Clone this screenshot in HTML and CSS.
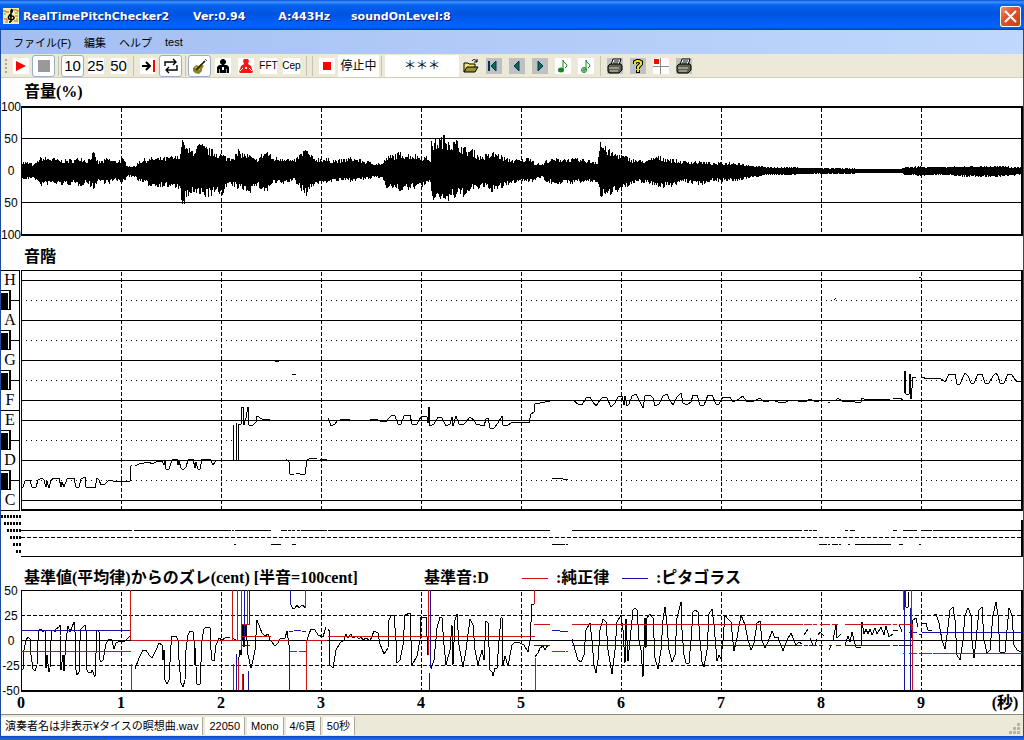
FILE: index.html
```html
<!DOCTYPE html>
<html lang="ja">
<head>
    <meta charset="UTF-8">
    <meta name="viewport" content="width=device-width, initial-scale=1.0">
    <title>RealTimePitchChecker2</title>
    <link rel="stylesheet" href="styles.css">
</head>
<body>
<div class="window">
    <header class="titlebar">
        <svg class="app-icon" width="16" height="16" viewBox="0 0 16 16">
            <rect width="16" height="16" fill="#f4f0a8"/>
            <path d="M0 3h3v1h3M10 2h4v1h2M1 11h3v2M12 8h3M11 13h4" fill="none" stroke="#d84830"/>
            <path d="M1 6h2M12 5h3M2 14h3M13 11h2" stroke="#48a050"/>
            <path d="M8 14V3c0-2 2-2 1 1L6 8c-3 4 5 5 5 2 0-3-5-2-3 0M8 14H6" fill="none" stroke="#000" stroke-width="1.5"/>
        </svg>
        <h1>RealTimePitchChecker2</h1>
        <span>Ver:0.94</span>
        <span class="tuning">A:443Hz</span>
        <span class="level">soundOnLevel:8</span>
        <button class="close" aria-label="閉じる">
            <svg width="21" height="21" viewBox="0 0 21 21"><path d="M5 5l11 11M16 5L5 16" stroke="#fff" stroke-width="2"/></svg>
        </button>
    </header>

    <nav class="menubar">
        <button>ファイル(F)</button>
        <button>編集</button>
        <button>ヘルプ</button>
        <button>test</button>
    </nav>

    <div class="toolbar">
        <span class="grip"></span>
        <button class="tool" aria-label="再生"><svg viewBox="0 0 16 16"><rect width="16" height="16" fill="#fff"/><path d="M3 3l10 5-10 5z" fill="#f00"/></svg></button>
        <button class="tool active" aria-label="停止"><svg viewBox="0 0 16 16"><path d="M2 2h12v12H2z" fill="#999"/></svg></button>
        <span class="sep"></span>
        <button class="tool num active">10</button>
        <button class="tool num">25</button>
        <button class="tool num">50</button>
        <span class="sep"></span>
        <button class="tool" aria-label="最後へ"><svg viewBox="0 0 16 16"><rect width="16" height="16" fill="#fff"/><path d="M2 8h8M6 4l4 4-4 4" fill="none" stroke="#000" stroke-width="2"/><path d="M13 2h2v12h-2z" fill="#f00"/></svg></button>
        <button class="tool active" aria-label="繰り返し"><svg viewBox="0 0 16 16"><path d="M2 8V4h11M10 1l3 3-3 3M14 7v5H4M6 9l-3 3 3 3" fill="none" stroke="#000" stroke-width="1.4"/></svg></button>
        <span class="sep"></span>
        <button class="tool active" aria-label="バイオリン"><svg viewBox="0 0 16 16"><path d="M1 10l3-3 3 1 2-2 3 2-2 3 0 2-3 3-4-1-2-2z" fill="#8a8420"/><path d="M4 12l9-9" stroke="#202000" stroke-width="1.6"/><path d="M13 1l2 2M11 3l2 2" stroke="#555"/><path d="M3 9l2 1M7 11l1 1" stroke="#d8c840"/></svg></button>
        <button class="tool" aria-label="男声"><svg viewBox="0 0 16 16"><rect width="16" height="16" fill="#fff"/><path d="M7 1h2l2 2v2L9 7h3l2 2v6H2V9l2-2h3L5 5V3z"/><path d="M7 9h2v3H7z" fill="#fff"/><path d="M4.500 11v4M11.500 11v4" stroke="#999"/></svg></button>
        <button class="tool" aria-label="女声"><svg viewBox="0 0 16 16"><rect width="16" height="16" fill="#fff"/><path d="M6 1h4l1 2-1 3 3 2 2 6-1 1H2l-1-1 2-6 3-2-1-3z" fill="#f01818"/><path d="M7 9h2v2H7z" fill="#fff"/><path d="M2 13l3-3M14 13l-3-3" stroke="#fff"/></svg></button>
        <button class="tool word">FFT</button>
        <button class="tool word">Cep</button>
        <span class="sep"></span>
        <span class="sep"></span>
        <span class="tool"><svg viewBox="0 0 16 16"><rect width="16" height="16" fill="#fff"/><path d="M4 4h8v8H4z" fill="#f00"/></svg></span>
        <output class="state">停止中</output>
        <span class="divider"></span>
        <output class="note">＊＊＊</output>
        <button class="tool" aria-label="開く"><svg viewBox="0 0 16 16"><path d="M1 14V5h4l1 1h6v3" fill="#f0e080" stroke="#000"/><path d="M1 14l3-5h11l-3 5z" fill="#9c9428" stroke="#000"/><path d="M9 3c2-3 4-1 5 1M14 1v3h-3" fill="none" stroke="#000"/></svg></button>
        <button class="tool" aria-label="先頭頁"><svg viewBox="0 0 16 16"><rect width="16" height="16" fill="#c0c0c0"/><path d="M2 3h2v10H2z" fill="#003060"/><path d="M10 3v10L5 8z" fill="#087040" stroke="#003060"/></svg></button>
        <button class="tool" aria-label="前頁"><svg viewBox="0 0 16 16"><rect width="16" height="16" fill="#c0c0c0"/><path d="M10 3v10L5 8z" fill="#087040" stroke="#003060"/></svg></button>
        <button class="tool" aria-label="次頁"><svg viewBox="0 0 16 16"><rect width="16" height="16" fill="#c0c0c0"/><path d="M6 3v10l5-5z" fill="#087040" stroke="#003060"/></svg></button>
        <button class="tool" aria-label="音符"><svg viewBox="0 0 16 16"><rect width="16" height="16" fill="#fff"/><path d="M8 12V2c0 3 4 3 4 6l-2 2" fill="none" stroke="#108820"/><ellipse cx="6" cy="12" rx="3" ry="2.5" fill="#108820"/></svg></button>
        <button class="tool" aria-label="音符再生"><svg viewBox="0 0 16 16"><rect width="16" height="16" fill="#fff"/><path d="M8 12V2c0 3 4 3 4 6l-2 2M4 12h4M6 10v4" fill="none" stroke="#108820"/><circle cx="6" cy="12" r="2.5" fill="none" stroke="#108820"/></svg></button>
        <span class="sep"></span>
        <button class="tool" aria-label="印刷"><svg viewBox="0 0 16 16"><rect width="16" height="16" fill="#c0c0c0"/><path d="M4 7l2-6h8l-2 6z" fill="#fff" stroke="#000"/><path d="M7 3h5M6 5h5" stroke="#000"/><path d="M1 8l2-2h11l1 2v4l-3 3H2l-1-2z" fill="#606050" stroke="#000"/><path d="M2 10h10M3 13h8" stroke="#d0d0c0"/></svg></button>
        <button class="tool" aria-label="ヘルプ"><svg viewBox="0 0 16 16"><rect width="16" height="16" fill="#c0c0c0"/><path d="M5 6V4l2-1h2l2 1v2L8 9v2M8 12v3" fill="none" stroke="#000" stroke-width="4"/><path d="M5 6V4l2-1h2l2 1v2L8 9v2M8 12v2" fill="none" stroke="#f0e800" stroke-width="2"/></svg></button>
        <button class="tool" aria-label="位置"><svg viewBox="0 0 16 16"><rect width="16" height="16" fill="#fff"/><path d="M7.500 0v16M0 8.500h16" stroke="#888"/><path d="M1 1h5v5H1z" fill="#f00"/></svg></button>
        <button class="tool" aria-label="頁印刷"><svg viewBox="0 0 16 16"><rect width="16" height="16" fill="#c0c0c0"/><path d="M4 7l2-6h8l-2 6z" fill="#fff" stroke="#000"/><path d="M7 3h5M6 5h5" stroke="#000"/><path d="M1 8l2-2h11l1 2v4l-3 3H2l-1-2z" fill="#606050" stroke="#000"/><path d="M2 10h10M3 13h8" stroke="#d0d0c0"/></svg></button>
    </div>

    <main>
        <!-- 音量 -->
        <h2 class="caption-volume">音量(%)</h2>
        <section class="row">
            <div class="scale"><span>100</span><span>50</span><span>0</span><span>50</span><span>100</span></div>
            <svg class="plot" id="volume" viewBox="21 106 1002 130"></svg>
        </section>

        <!-- 音階 -->
        <h2 class="caption-pitch">音階</h2>
        <section class="row">
            <svg class="keys" id="keys" viewBox="1 270 20 241"></svg>
            <svg class="plot" id="pitch" viewBox="21 270 1002 241"></svg>
        </section>
        <section class="row">
            <svg class="keys" id="octave-marks" viewBox="1 511 20 46"></svg>
            <svg class="plot" id="octave" viewBox="21 511 1002 46"></svg>
        </section>

        <!-- 基準値からのズレ -->
        <div class="caption-cent">
            <h2>基準値(平均律)からのズレ(cent) [半音=100cent]</h2>
            <span class="base">基準音:D</span>
            <i class="line-red"></i><span class="legend">:純正律</span>
            <i class="line-blue"></i><span>:ピタゴラス</span>
        </div>
        <section class="row">
            <div class="scale"><span>50</span><span>25</span><span>0</span><span>-25</span><span>-50</span></div>
            <svg class="plot" id="cent" viewBox="21 590 1002 102"></svg>
        </section>
        <svg class="seconds" id="seconds" viewBox="1 692 1022 22"></svg>
    </main>

    <footer class="statusbar">
        <span>演奏者名は非表示¥タイスの瞑想曲.wav</span>
        <span>22050</span>
        <span>Mono</span>
        <span>4/6頁</span>
        <span>50秒</span>
        <svg class="resize" width="12" height="12" viewBox="0 0 12 12"><path d="M8 0h3v3H8zM4 4h3v3H4zM8 4h3v3H8zM0 8h3v3H0zM4 8h3v3H4zM8 8h3v3H8z" fill="#b8b4a2"/></svg>
    </footer>
    <div class="edge"></div>
</div>
<script src="chart.js"></script>
</body>
</html>
```
FILE: styles.css
```css
* {
    box-sizing: border-box;
}

body {
    margin: 0;
    background: #fff;
    color: #000;
    font-family: "Liberation Sans", "Noto Sans CJK JP", sans-serif;
    font-size: 12px;
}

button {
    margin: 0;
    padding: 0;
    border: 0;
    background: none;
    color: inherit;
    font: inherit;
}

.window {
    display: flex;
    flex-direction: column;
    min-height: 100vh;
    padding: 0 1px;
    background: #1c4a9c;
}

/* タイトルバー */
.titlebar {
    display: flex;
    align-items: center;
    height: 30px;
    margin: 0 -1px;
    padding: 2px 3px 0;
    background: linear-gradient(#0a50d0, #3c94fc 2px, #0462ec 5px, #0054e0 14px, #0060fc 24px, #0064ff 27px, #0040c0);
    color: #fff;
    font-family: "DejaVu Sans", sans-serif;
    font-size: 11px;
    font-weight: bold;
    text-shadow: 1px 1px #0a1883;
}

.titlebar h1 {
    width: 170px;
    margin: 0 0 0 4px;
    font-size: 11px;
}

.titlebar .tuning {
    margin-left: 33px;
}

.titlebar .level {
    margin-left: 21px;
}

.close {
    width: 21px;
    height: 21px;
    margin-left: auto;
    border-radius: 3px;
    background: linear-gradient(135deg, #f0987c, #e05430 40%, #c83c10);
    box-shadow: inset 0 0 0 1px #fff;
}

.close svg {
    display: block;
}

/* メニュー */
.menubar {
    display: flex;
    gap: 13px;
    height: 24px;
    padding: 0 12px;
    background: linear-gradient(90deg, #a4bef2, #c0d8fc);
    font-size: 11px;
}

/* ツールバー */
.toolbar {
    display: flex;
    align-items: center;
    height: 24px;
    padding-left: 4px;
    border-bottom: 1px solid #d2cebc;
    background: #ece9d8;
}

.grip {
    width: 2px;
    height: 14px;
    margin-right: 2px;
    background: repeating-linear-gradient(#aaa698 0 2px, transparent 2px 4px);
}

.tool {
    display: flex;
    flex: none;
    align-items: center;
    justify-content: center;
    width: 23px;
    height: 22px;
}

.tool svg {
    width: 16px;
    height: 16px;
}

.tool.active {
    border: 1px solid #98b0c4;
    border-radius: 3px;
    background: #fff;
}

.tool.num {
    font-size: 15px;
    background: linear-gradient(#fff, #fff) center / 16px 16px no-repeat;
}

.tool.num.active {
    background: #fff;
}

.tool.word {
    font-size: 10px;
    background: linear-gradient(#fff, #fff) center / 17px 16px no-repeat;
}

.sep {
    flex: none;
    width: 1px;
    height: 20px;
    margin: 0 2px 0 3px;
    background: #c8c4b0;
}

.state {
    width: 41px;
    height: 22px;
    background: #fff;
    line-height: 22px;
    text-align: center;
}

.divider {
    width: 1px;
    height: 20px;
    margin: 0 3px 0 2px;
    background: #c8c4b0;
}

.note {
    width: 74px;
    height: 22px;
    background: #fff;
    line-height: 22px;
    text-align: center;
}

/* グラフ */
main {
    flex: 1;
    background: #fff;
}

h2,
.caption-cent {
    margin: 0;
    font-family: "Liberation Serif", "Noto Sans CJK JP", serif;
    font-size: 16px;
    font-weight: bold;
    line-height: 20px;
}

.caption-volume {
    padding: 4px 23px;
}

.caption-pitch {
    padding: 11px 23px 3px;
}

.caption-cent {
    display: flex;
    align-items: center;
    padding: 11px 23px 2px;
}

.base {
    width: 98px;
    margin-left: 66px;
}

.line-red,
.line-blue {
    width: 26px;
    height: 1px;
    margin-right: 8px;
    background: #c81414;
}

.line-blue {
    background: #1414a0;
}

.legend {
    width: 66px;
}

.row {
    display: flex;
}

.scale {
    display: flex;
    flex: none;
    flex-direction: column;
    justify-content: space-between;
    width: 20px;
    margin: -7px 0;
    line-height: 16px;
}

.scale span {
    display: flex;
    justify-content: center;
}

.keys {
    flex: none;
    width: 20px;
}

.plot {
    display: block;
    flex: 1;
    min-width: 0;
}

.seconds {
    display: block;
    width: 100%;
}

svg path.line {
    fill: none;
    stroke: #000;
    shape-rendering: crispEdges;
}

svg path.red {
    stroke: #c81414;
}

svg path.blue {
    stroke: #1414a0;
}

svg path.bold {
    stroke-width: 2;
}

svg path.dash {
    stroke-dasharray: 4 2;
}

svg path.dot {
    stroke-dasharray: 1 4;
}

svg path.marks {
    stroke-width: 3;
    stroke-dasharray: 2 1;
}

.key-name,
.second {
    font-family: "Liberation Serif", "Noto Sans CJK JP", serif;
    font-size: 16px;
    text-anchor: middle;
}

.second {
    font-weight: bold;
}

/* ステータスバー */
.statusbar {
    display: flex;
    align-items: center;
    height: 22px;
    padding-top: 1px;
    border-top: 1px solid #8c8a80;
    background: #ece9d8;
}

.statusbar span {
    height: 18px;
    margin-right: 2px;
    padding: 0 4px;
    border-right: 1px solid #aca899;
    background: #fff;
    font-size: 11px;
    line-height: 18px;
    white-space: nowrap;
}

.resize {
    margin: 6px 2px 0 auto;
}

.edge {
    height: 4px;
    margin: 0 -1px;
    background: linear-gradient(90deg, #2c7a3c 107px, transparent 107px) bottom / 100% 1px no-repeat, linear-gradient(#0a48c8, #2a6ae8);
}
```
FILE: chart.js
```js
const SVG = 'http://www.w3.org/2000/svg';

function path(id, cls, d) {
    const p = document.createElementNS(SVG, 'path');
    p.setAttribute('d', d);
    p.setAttribute('class', cls);
    document.getElementById(id).appendChild(p);
}

function text(id, cls, x, y, str) {
    const t = document.createElementNS(SVG, 'text');
    t.setAttribute('x', x);
    t.setAttribute('y', y);
    t.setAttribute('class', cls);
    t.textContent = str;
    document.getElementById(id).appendChild(t);
}

// 横線 [x1, x2, y] の配列
const rows = a => a.map(([x1, x2, y]) => `M${x1} ${y + 0.5}H${x2}`).join('');
// 縦線 [x, y1, y2] の配列
const cols = a => a.map(([x, y1, y2]) => `M${x + 0.5} ${y1}V${y2}`).join('');
// 折れ線 "x,y x,y | x,y ..."
const trace = s => s.split('|').map(t => 'M' + t.trim()).join('');

function grid(id, top, bottom) {
    for (let x = 121; x < 1000; x += 100) path(id, 'line dash', cols([[x, top + 2, bottom]]));
    path(id, 'line', cols([[21, top, bottom]]));
    path(id, 'line bold', `M1022 ${top}V${bottom}`);
}

// ---- 音量 ----
const envelope = [
    [21, 8, 8], [30, 8, 7], [33, 5, 5], [40, 13, 14], [51, 12, 12], [63, 10, 13], [75, 11, 13], [80, 14, 14],
    [86, 10, 11], [93, 18, 17], [98, 8, 9], [107, 12, 12], [115, 9, 9], [122, 12, 11], [128, 4, 5], [135, 4, 5],
    [139, 10, 10], [150, 12, 14], [165, 13, 15], [178, 14, 17], [180, 20, 24], [182, 29, 32], [184, 24, 31],
    [190, 20, 22], [200, 26, 24], [210, 21, 24], [222, 16, 22], [227, 13, 14], [240, 18, 17], [250, 15, 20],
    [255, 10, 14], [266, 20, 21], [272, 13, 12], [285, 13, 12], [293, 9, 8], [305, 22, 24], [313, 12, 14],
    [320, 12, 11], [340, 10, 9], [350, 13, 9], [362, 10, 8], [375, 7, 6], [382, 7, 6], [386, 13, 15],
    [400, 18, 19], [408, 16, 18], [420, 15, 15], [430, 12, 12], [431, 28, 27], [444, 34, 28], [450, 29, 27],
    [458, 28, 25], [466, 21, 23], [472, 21, 19], [480, 14, 16], [495, 18, 20], [505, 12, 14], [520, 10, 9],
    [530, 14, 10], [535, 7, 8], [543, 6, 5], [545, 10, 11], [560, 12, 12], [580, 11, 11], [597, 9, 10],
    [599, 22, 18], [600, 29, 24], [606, 22, 27], [612, 18, 20], [620, 16, 18], [630, 12, 14], [640, 10, 10],
    [648, 10, 12], [655, 14, 14], [668, 12, 16], [680, 9, 10], [700, 9, 13], [712, 7, 9], [737, 8, 10],
    [745, 6, 7], [755, 4, 5], [770, 3, 3], [790, 3, 3], [815, 2, 2], [840, 2, 2], [870, 1, 1], [900, 1, 1],
    [905, 3, 3], [920, 4, 4], [940, 3, 3], [970, 4, 5], [1000, 4, 5], [1022, 3, 3]
];
// 1px だけ突き出るピーク
const peaks = { 182: [30, 32], 184: [25, 32], 199: [26, 22], 238: [21, 16], 444: [35, 26], 448: [28, 29], 456: [30, 22], 600: [28, 24] };

function drawVolume() {
    let d = '';
    let seed = 7;
    let i = 0;
    // 1px ごとに振れ幅をばらつかせる
    const jitter = () => {
        seed = (seed * 16807) % 2147483647;
        return 0.64 + (seed / 2147483647) * 0.42;
    };
    for (let x = 21; x < 1022; x++) {
        while (envelope[i + 1][0] < x) i++;
        const [x0, u0, d0] = envelope[i];
        const [x1, u1, d1] = envelope[i + 1];
        const k = (x - x0) / (x1 - x0);
        let up = (u0 + (u1 - u0) * k) * jitter();
        let down = (d0 + (d1 - d0) * k) * jitter();
        if (peaks[x]) [up, down] = peaks[x];
        d += `M${x + 0.5} ${170 - Math.round(up)}V${172 + Math.round(Math.min(down, 32))}`;
    }
    grid('volume', 106, 236);
    path('volume', 'line', rows([[21, 1022, 138], [21, 1022, 202]]));
    path('volume', 'line bold', 'M21 107H1023M21 235H1023');
    path('volume', 'line', d);
}

// ---- 音階 ----
const pitchTrace = `22,488 23,487 25,481 30,480 32,487 36,487 38,480 42,478 44,480 46,487 47,481 49,488 51,480 54,478 59,478 61,487
62,482 64,487 67,479 74,478 76,487 79,487 81,479 85,477 86,487 95,488 97,478 99,480 101,485 105,484 109,480 113,481 115,482
130,481 131,466 132,465 | 135,466 139,464 144,463 149,462 152,464 156,462 162,461 164,465 165,460 166,469 169,469 172,460
177,459 178,465 179,461 181,468 183,470 186,467 188,460 193,459 195,468 196,462 198,469 200,469 202,459 210,459 213,465 216,461
| 232,460 233,460 233,425 | 236,423 236,460 238,460 238,424 241,424 242,407 243,407 244,425 246,418 248,407 249,425
252,426 256,422 257,416 262,419 270,420 | 275,361 277,362 279,361 | 292,374 296,374 | 286,459 289,462 290,474 294,474 |
296,473 300,474 305,474 307,460 311,458 317,459 | 320,460 327,459 | 328,418 329,420 331,426 335,424 337,421 340,420 345,419
350,419 | 365,421 375,419 380,421 386,422 389,418 392,415 395,416 398,424 401,424 404,416 410,415 412,424 417,424 419,420
422,416 427,417 428,423 429,407 430,426 434,424 438,417 442,418 446,426 450,424 452,417 453,426 456,416 459,424 463,425
467,421 470,417 474,420 476,424 484,426 486,419 488,418 490,428 494,428 498,423 502,416 503,425 507,426 512,422 522,422
529,423 531,414 534,412 535,404 545,402 550,401 | 552,479 556,478 562,478 564,480 568,479 | 574,401 578,404 582,405 586,398
590,397 593,402 596,406 600,400 603,397 607,398 611,407 615,403 618,397 622,396 624,405 625,396 627,406 629,404 632,396
636,394 639,400 643,408 645,396 650,395 653,398 655,406 659,404 663,396 667,394 670,401 673,405 677,397 681,393 683,403
687,405 691,402 693,395 697,395 700,405 704,405 708,395 712,395 716,404 719,404 723,397 730,397 733,402 739,399 743,396
746,401 752,402 760,398 764,402 773,400 778,402 784,403 790,400 805,402 810,399 816,402 822,400 | 828,402 830,402 |
836,400 838,398 842,401 855,402 861,402 862,398 866,400 870,399 874,400 880,399 884,400 890,399 | 893,399 900,398 903,400 |
904,394 905,371 906,394 909,394 910,374 911,399 913,377 916,378 | 921,377 928,379 934,378 940,378 945,382 949,374 955,374
957,384 960,384 965,373 968,376 971,383 974,383 978,374 982,374 985,383 989,383 993,376 996,373 998,376 1000,383 1004,383
1008,374 1012,375 1016,381 1021,382 | 834,300 836,298 | 919,277 921,277`;

function drawPitch() {
    grid('pitch', 270, 511);
    path('pitch', 'line', rows([280, 320, 360, 400, 420, 460, 500, 270].map(y => [21, 1022, y])));
    for (const y of [300, 340, 380, 440, 480]) path('pitch', 'line dot', rows([[21, 1022, y]]));
    path('pitch', 'line bold', 'M21 510H1023');
    path('pitch', 'line', trace(pitchTrace));

    // 鍵盤
    path('keys', 'line', 'M1 270.500H19.500V510.500H1M1 410.500H19');
    for (const y of [300, 340, 380, 440, 480]) {
        path('keys', 'line', `M1 ${y - 9.5}H10.500V${y + 9.5}H1M10 ${y + 0.5}H20`);
        path('keys', '', `M1 ${y - 7}H8V${y + 10}H1z`);
        path('keys', 'line', `M9.500 ${y - 9}V${y + 10}`);
    }
    const names = { H: 285, A: 325, G: 365, F: 405, E: 425, D: 465, C: 505 };
    for (const n in names) text('keys', 'key-name', 10, names[n], n);
}

// ---- オクターブ ----
function drawOctave() {
    [516, 523, 530, 537, 544, 551].forEach((y, i) => path('octave-marks', 'line marks', `M${1 + i * 3} ${y + 0.5}H21`));
    path('octave', 'line', rows([
        [21, 132, 530], [134, 231, 530], [232, 234, 530], [235, 271, 530], [281, 287, 530], [288, 291, 530],
        [292, 295, 530], [297, 300, 530], [301, 327, 530], [328, 550, 530], [572, 802, 530], [804, 808, 530],
        [809, 812, 530], [813, 817, 530], [845, 848, 530], [850, 855, 530], [893, 897, 530], [903, 917, 530],
        [921, 932, 530], [933, 1022, 530], [234, 236, 544], [271, 281, 544], [292, 296, 544], [552, 565, 544],
        [566, 568, 544], [819, 827, 544], [828, 830, 544], [832, 838, 544], [839, 841, 544], [848, 850, 544],
        [855, 891, 544], [899, 903, 544], [919, 921, 544], [21, 1022, 556]
    ]));
    path('octave', 'line dash', rows([[21, 1022, 537]]));
    path('octave', 'line bold', 'M1022 520V557');
}

// ---- ズレ(cent) ----
const centTrace = `22,670 23,669 24,650 26,640 28,637 30,639 31,655 33,669 35,671 37,665 38,640 39,630 41,629 43,632 45,630 46,668
47,655 49,672 50,668 51,640 52,631 54,630 55,632 56,629 59,627 60,625 60,635 61,670 63,655 64,671 66,640 68,626 70,632 72,627
74,622 75,632 75,665 77,675 79,672 80,640 81,629 83,627 85,625 86,630 86,668 88,672 91,673 92,670 95,677 97,630 99,632 100,660
101,662 103,660 106,644 109,639 112,640 114,649 116,643 120,641 124,642 127,639 130,636 | 135,669 139,658 143,650 146,650
149,655 152,658 156,650 159,643 162,645 163,660 164,650 165,680 167,684 169,680 171,645 172,636 176,636 178,640 179,660
181,683 183,687 185,680 186,650 188,635 190,631 193,632 194,640 195,665 195,648 197,684 200,684 202,640 204,629 206,627
210,628 211,650 212,660 214,661 216,645 219,638 222,640 225,638 230,637 | 232,638 236,640 | 238,664 240,650 241,655 243,625
244,647 246,625 248,655 251,668 253,660 255,650 257,620 260,628 262,633 265,636 268,634 270,640 272,642 275,646 278,643
280,639 285,638 287,631 289,645 290,651 | 291,605 293,609 295,608 297,605 299,608 301,606 303,605 305,608 | 307,640 309,634
311,629 315,630 318,635 323,637 325,630 326,627 | 328,631 329,629 330,665 333,668 336,650 340,643 344,640 346,634 348,638
351,634 353,638 356,636 359,639 361,637 363,640 366,638 370,641 374,631 378,633 380,644 384,654 388,648 389,620 391,616
394,615 396,640 397,663 400,660 403,645 405,615 410,613 411,640 412,665 417,656 420,640 421,617 426,617 428,655 | 431,669
434,660 437,628 440,617 442,618 444,645 446,665 450,650 452,625 453,665 455,620 457,614 459,645 463,667 466,650 470,619
473,625 475,650 478,665 482,650 484,660 486,621 488,623 490,670 492,672 493,676 495,668 497,668 499,640 501,618 502,617
503,665 505,656 508,666 512,645 515,642 520,643 524,645 528,652 530,640 532,604 534,604 | 535,657 538,653 540,648 543,646
545,650 548,645 | 572,639 575,650 578,660 581,662 584,655 586,630 590,623 592,640 594,665 596,673 598,660 600,630 603,619
606,622 608,650 612,674 615,650 617,622 621,615 623,630 625,663 626,619 628,661 630,640 633,610 635,608 637,610 639,640
641,650 643,677 645,618 646,648 647,618 650,614 653,618 655,658 658,669 661,650 663,620 665,607 667,625 669,650 672,662
675,655 677,618 681,602 682,630 684,655 686,663 689,663 691,640 693,612 695,610 698,612 700,640 702,662 704,667 707,650
709,614 712,609 714,625 717,661 719,655 721,659 723,640 725,615 728,619 731,622 734,651 737,638 741,615 745,625 748,640
751,650 754,643 757,623 760,621 762,640 765,648 768,642 772,631 775,638 778,637 783,651 787,640 791,633 796,645 799,642
802,644 | 804,635 808,629 | 810,638 813,645 815,645 817,639 | 818,635 820,632 824,636 | 829,650 831,646 | 833,640 836,625
837,638 841,634 | 845,645 848,636 850,642 852,632 854,640 856,647 861,647 862,622 864,634 866,629 868,634 870,629 872,635
875,628 877,634 881,627 884,635 886,626 889,637 893,634 | 893,630 898,630 | 899,624 902,632 | 904,592 906,607 908,607
909,592 | 911,638 913,620 916,618 918,627 | 921,624 926,623 928,630 932,631 | 933,616 936,614 939,623 942,640 945,649
947,635 950,610 953,607 955,620 957,655 960,660 963,640 965,615 968,608 971,615 972,640 974,658 976,640 979,610 982,607
984,640 987,653 990,650 993,615 996,602 998,615 1000,652 1005,652 1007,630 1009,608 1012,615 1014,645 1017,650 1021,652`;

function drawCent() {
    grid('cent', 590, 692);
    path('cent', 'line', rows([[21, 1022, 590], [21, 1022, 640]]));
    path('cent', 'line dash', rows([[21, 1022, 615]]));
    path('cent', 'line dash', rows([[21, 1022, 665]]));
    path('cent', 'line', trace(centTrace));
    // ピタゴラス
    path('cent', 'line blue', rows([
        [21, 131, 630], [241, 250, 645], [289, 293, 631], [294, 301, 630], [302, 306, 631], [534, 550, 645],
        [552, 560, 630], [560, 568, 631], [572, 802, 645], [804, 808, 645], [809, 817, 645], [819, 823, 645],
        [829, 832, 645], [836, 841, 645], [845, 890, 645], [893, 898, 645], [899, 912, 645], [909, 917, 632],
        [919, 921, 634], [922, 1022, 632]
    ]) + cols([
        [236, 654, 690], [244, 590, 640], [249, 590, 624], [248, 671, 690], [243, 674, 690], [290, 590, 605],
        [289, 649, 690], [430, 590, 668], [429, 673, 690], [904, 590, 690], [905, 590, 606], [910, 608, 690]
    ]));
    // 純正律
    path('cent', 'line red', rows([
        [21, 131, 651], [131, 240, 640], [241, 271, 636], [241, 250, 624], [271, 289, 640], [290, 297, 651],
        [299, 306, 651], [307, 327, 640], [328, 535, 636], [534, 550, 624], [552, 565, 651], [566, 568, 651],
        [572, 803, 624], [804, 812, 624], [813, 817, 624], [820, 830, 624], [832, 838, 624], [845, 891, 624],
        [893, 897, 624], [899, 912, 624], [903, 905, 653], [909, 917, 653], [919, 932, 653], [933, 1022, 653]
    ]) + cols([
        [130, 590, 640], [131, 664, 690], [232, 590, 640], [233, 664, 690], [237, 590, 640], [238, 660, 690],
        [241, 590, 649], [247, 590, 624], [242, 674, 690], [305, 590, 608], [306, 640, 690], [428, 590, 655],
        [534, 590, 604], [535, 658, 690], [903, 590, 610], [911, 590, 630], [912, 624, 690]
    ]));
    path('cent', 'line bold', 'M21 691H1023');

    for (let i = 0; i < 10; i++) text('seconds', 'second', 21 + i * 100, 708, i);
    text('seconds', 'second', 1005, 708, '(秒)');
}

drawVolume();
drawPitch();
drawOctave();
drawCent();
```
